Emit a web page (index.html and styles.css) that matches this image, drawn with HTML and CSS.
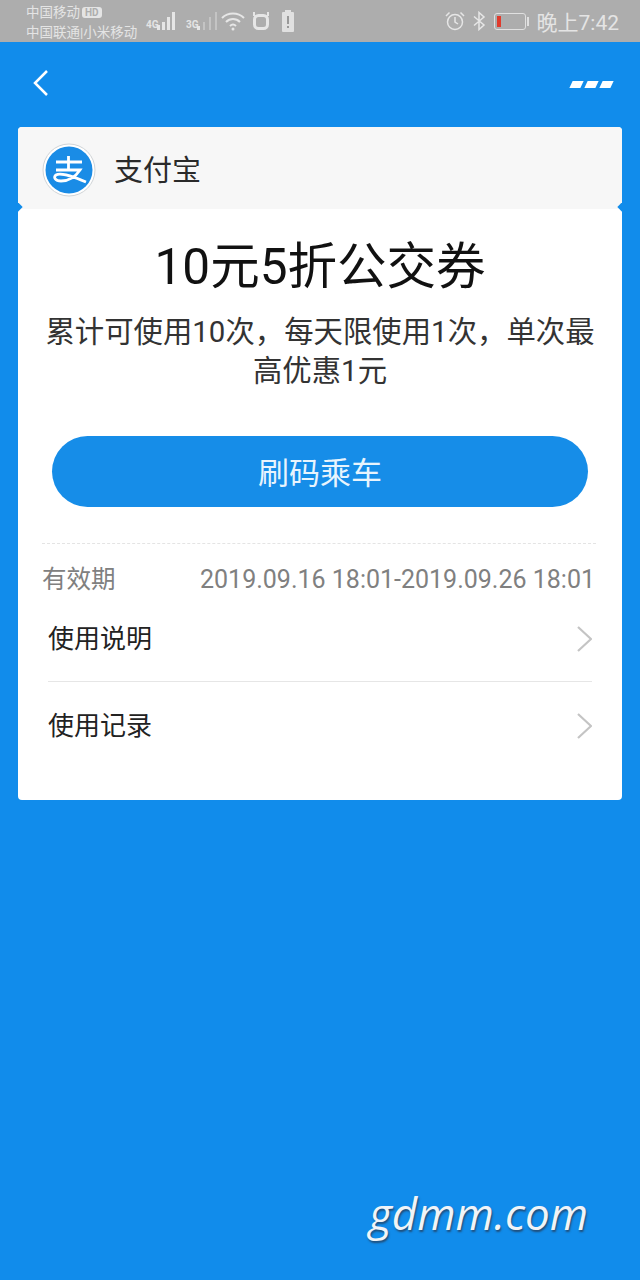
FILE: index.html
```html
<!DOCTYPE html>
<html lang="zh-CN">
<head>
  <meta charset="UTF-8">
  <meta name="viewport" content="width=device-width, initial-scale=1.0">
  <title>公交券</title>
  <link rel="stylesheet" href="styles.css">
</head>
<body>
  <div class="page">
    <!-- status bar -->
    <div class="status-bar">
      <div class="carriers">
        <div class="carrier-top">中国移动 <span class="hd">HD</span></div>
        <div>中国联通|小米移动</div>
      </div>
      <div class="net">
        <span class="net-label">4G</span>
        <svg width="18" height="20" viewBox="0 0 18 20"><g fill="#e6e6e6"><rect x="0" y="14" width="3" height="5"/><rect x="5" y="11" width="3" height="8"/><rect x="10" y="6" width="3" height="13"/><rect x="15" y="1" width="3" height="18"/></g></svg>
        <span class="net-label net-label-second">3G</span>
        <svg width="21" height="20" viewBox="0 0 21 20"><rect x="0" y="15" width="3" height="4" fill="#e6e6e6"/><g fill="#c4c4c4"><rect x="6" y="11" width="2" height="8"/><rect x="12" y="6" width="2" height="13"/><rect x="18" y="1" width="2" height="18"/></g></svg>
        <svg class="wifi" width="24" height="20" viewBox="0 0 24 20" fill="none" stroke="#e6e6e6" stroke-width="2"><path d="M1 7C7 1 17 1 23 7"/><path d="M5 11C9 7 15 7 19 11"/><path d="M9 15C11 13 13 13 15 15"/><circle cx="12" cy="18" r="1.500" fill="#e6e6e6" stroke="none"/></svg>
        <svg class="nfc" width="18" height="20" viewBox="0 0 18 20" fill="none" stroke="#e6e6e6" stroke-width="3"><rect x="2.500" y="4.500" width="13" height="13" rx="4"/><path d="M2 1V5M16 1V5" stroke-width="2"/></svg>
        <svg class="saver" width="12" height="22" viewBox="0 0 12 22"><rect x="3" y="0" width="6" height="3" fill="#e0e0e0"/><rect x="0" y="2" width="12" height="20" rx="1" fill="#e0e0e0"/><rect x="5" y="6" width="2" height="8" fill="#999"/><rect x="5" y="16" width="2" height="2" fill="#999"/></svg>
      </div>
      <div class="status-right">
        <svg width="20" height="20" viewBox="0 0 20 20" fill="none" stroke="#e6e6e6" stroke-width="1.500"><circle cx="10" cy="11" r="7.500"/><path d="M10 6V11L13 13"/><path d="M1 5L4.500 1.500M19 5L15.500 1.500"/></svg>
        <svg class="bt" width="14" height="20" viewBox="0 0 14 20" fill="none" stroke="#e6e6e6" stroke-width="1.500"><path d="M2 5.500L12 14L7 18.500V1.500L12 6L2 14.500"/></svg>
        <div class="battery"><div class="battery-level"></div></div>
        <div class="battery-tip"></div>
        <span class="clock">晚上7:42</span>
      </div>
    </div>

    <!-- nav -->
    <div class="nav">
      <svg width="18" height="28" viewBox="0 0 18 28" fill="none" stroke="#fff" stroke-width="2.500"><path d="M15 2L3 14L15 26"/></svg>
      <div class="more"><span></span><span></span><span></span></div>
    </div>

    <!-- ticket -->
    <div class="card">
      <div class="card-head">
        <svg class="logo" width="54" height="54" viewBox="0 0 54 54">
          <circle cx="27" cy="27" r="26" fill="#fff" stroke="#cfd3d6"/>
          <circle cx="27" cy="27" r="23.500" fill="#1a8ce6"/>
          <g fill="none" stroke="#fff" stroke-width="2.800">
            <path d="M14 19H40"/>
            <path d="M26.500 13V26"/>
            <path d="M14 27H38C34 33 27 38 19 38C13 38 11 34 14 32C18 29.500 27 32 44 39"/>
          </g>
        </svg>
        <span class="brand">支付宝</span>
      </div>
      <div class="card-body">
        <h1 class="title">10元5折公交券</h1>
        <p class="desc">累计可使用10次，每天限使用1次，单次最高优惠1元</p>
        <div class="ride-btn">刷码乘车</div>
        <div class="validity">
          <span class="validity-label">有效期</span>
          <span class="validity-date">2019.09.16 18:01-2019.09.26 18:01</span>
        </div>
        <div class="row row-first">
          <span>使用说明</span>
          <svg width="16" height="28" viewBox="0 0 16 28" fill="none" stroke="#c4c4c4" stroke-width="2.200"><path d="M2 2L15 14L2 26"/></svg>
        </div>
        <div class="row">
          <span>使用记录</span>
          <svg width="16" height="28" viewBox="0 0 16 28" fill="none" stroke="#c4c4c4" stroke-width="2.200"><path d="M2 2L15 14L2 26"/></svg>
        </div>
      </div>
    </div>

    <div class="watermark">gdmm.com</div>
  </div>
</body>
</html>
```

FILE: styles.css
```css
html, body {
  margin: 0;
  padding: 0;
}
body {
  font-family: Roboto, "Noto Sans CJK SC", sans-serif;
  background-color: #118ceb;
}
.page {
  height: 1280px;
  display: flex;
  flex-direction: column;
  overflow: hidden;
}
.status-bar {
  height: 42px;
  box-sizing: border-box;
  background-color: #adadad;
  color: #e4e4e4;
  display: flex;
  align-items: center;
  padding: 0 21px 0 26px;
}
.carriers {
  width: 120px;
  font-size: 13.500px;
  line-height: 20px;
  white-space: nowrap;
  padding-top: 2px;
}
.carrier-top {
  display: flex;
  align-items: center;
  gap: 2px;
}
.hd {
  font-size: 10px;
  line-height: 11px;
  font-weight: bold;
  color: #adadad;
  background-color: #e4e4e4;
  border-radius: 3px;
  padding: 0 3px;
}
.net {
  flex: 1;
  display: flex;
  align-items: center;
}
.net-label {
  width: 11px;
  font-size: 10px;
  font-weight: bold;
  align-self: flex-start;
  margin-top: 9px;
  white-space: nowrap;
}
.net-label-second {
  margin-left: 11px;
}
.wifi {
  margin-left: 3px;
}
.nfc {
  margin-left: 7px;
}
.saver {
  margin-left: 12px;
}
.status-right {
  display: flex;
  align-items: center;
}
.bt {
  margin-left: 7px;
}
.battery {
  width: 32px;
  height: 17px;
  margin-left: 8px;
  box-sizing: border-box;
  border: 1px solid #e0e0e0;
  border-radius: 3px;
  padding: 2px;
}
.battery-level {
  width: 4px;
  height: 11px;
  background-color: #e03a2c;
}
.battery-tip {
  width: 2px;
  height: 9px;
  margin-left: 1px;
  background-color: #e0e0e0;
}
.clock {
  font-size: 21px;
  margin-left: 8px;
  white-space: nowrap;
}
.nav {
  height: 85px;
  box-sizing: border-box;
  padding: 0 28px 4px 32px;
  display: flex;
  align-items: center;
  justify-content: space-between;
}
.more {
  display: flex;
  gap: 4px;
  margin-top: 4px;
}
.more span {
  width: 11px;
  height: 7px;
  background-color: #fff;
  transform: skewX(-25deg);
}
.card {
  margin: 0 18px;
  width: 604px;
  border-radius: 4px;
  overflow: hidden;
  background-color: #fff;
  position: relative;
}
/* the little cut-outs where the header meets the body */
.card::before,
.card::after {
  content: "";
  position: absolute;
  top: 76px;
  width: 8px;
  height: 8px;
  background-color: #118ceb;
  transform: rotate(45deg);
}
.card::before {
  left: -5px;
}
.card::after {
  right: -5px;
}
.card-head {
  height: 82px;
  box-sizing: border-box;
  background-color: #f7f7f7;
  display: flex;
  align-items: center;
  padding-left: 24px;
  gap: 18px;
}
.brand {
  font-size: 29px;
  color: #2a2a2a;
}
.logo {
  margin-top: 3px;
}
.card-body {
  padding: 27px 28px 32px 24px;
}
.title {
  margin: 0 -4px 0 0;
  font-size: 49.500px;
  line-height: 62px;
  font-weight: normal;
  text-align: center;
  color: #111;
}
.desc {
  margin: 15px -4px 0 0;
  font-size: 29.400px;
  line-height: 39px;
  text-align: center;
  color: #333;
}
.ride-btn {
  margin: 45px 6px 0 10px;
  height: 71px;
  box-sizing: border-box;
  padding-bottom: 3px;
  border-radius: 36px;
  background-color: #168de8;
  color: #e8f4fd;
  font-size: 31px;
  display: flex;
  align-items: center;
  justify-content: center;
}
.validity {
  margin: 36px -2px 0 0;
  border-top: 1px dashed #e4e4e4;
  height: 70px;
  display: flex;
  justify-content: space-between;
  align-items: center;
  color: #808080;
  white-space: nowrap;
}
.validity-label {
  font-size: 24.500px;
  margin-top: -3px;
}
.validity-date {
  font-size: 25px;
  margin-right: 1px;
}
.row {
  margin: 0 2px 0 6px;
  height: 86px;
  display: flex;
  align-items: center;
  justify-content: space-between;
  font-size: 26px;
  color: #222;
}
.row span {
  margin-top: -3px;
}
.row svg {
  margin-top: 1px;
}
.row-first {
  border-bottom: 1px solid #e6e6e6;
  margin-top: -19px;
}
.watermark {
  position: absolute;
  left: 369px;
  top: 1183px;
  font-family: "Open Sans", sans-serif;
  font-size: 44px;
  font-style: italic;
  font-weight: 500;
  color: #f0f4f8;
  text-shadow: 1px 2px 2px rgba(40, 50, 70, 0.7);
}
```
